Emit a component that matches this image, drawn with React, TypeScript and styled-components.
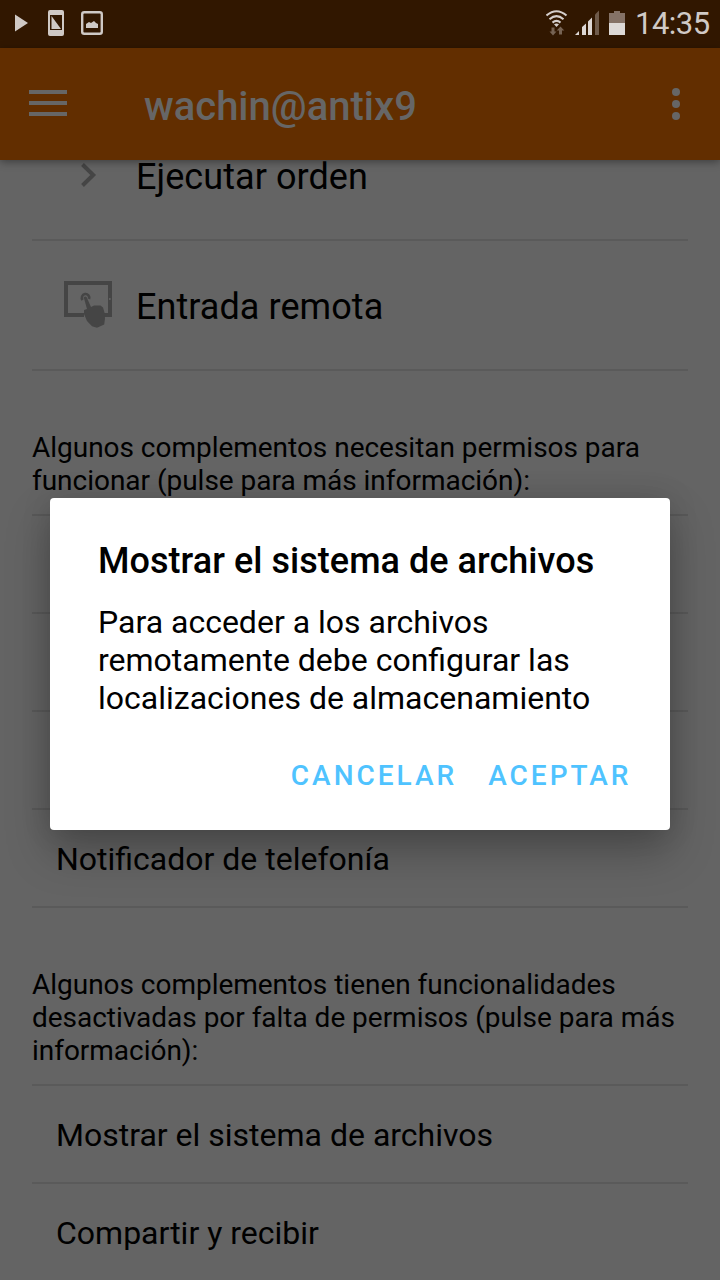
import React from 'react';
import styled, { createGlobalStyle } from 'styled-components';

const GlobalStyle = createGlobalStyle`
  * { box-sizing: border-box; }
  body { margin: 0; font-family: Roboto, sans-serif; background: #646464; color: #000; }
`;

const Screen = styled.div`
  position: relative;
  width: 720px;
  height: 1280px;
  overflow: hidden;
  display: flex;
  flex-direction: column;
  background: #646464;
`;

const StatusBar = styled.header`
  height: 48px;
  flex: none;
  display: flex;
  align-items: center;
  justify-content: space-between;
  background: #311700;
  svg { display: block; }
`;

const StatusGroup = styled.div`
  display: flex;
  align-items: center;
`;

const Clock = styled.span`
  width: 85px;
  font-size: 31px;
  line-height: 48px;
  letter-spacing: -0.5px;
  color: #d0cac6;
  white-space: nowrap;
`;

const AppBar = styled.div`
  position: relative;
  z-index: 1;
  height: 112px;
  flex: none;
  display: flex;
  align-items: center;
  padding: 0 40px 0 29px;
  background: #622e00;
  box-shadow: 0 2px 8px rgba(0, 0, 0, 0.38);
  svg { display: block; flex: none; }
`;

const AppTitle = styled.h1`
  margin: 6px 0 0 77px;
  flex: 1;
  font-size: 40px;
  line-height: 48px;
  font-weight: 500;
  color: #666;
`;

const Content = styled.main`
  flex: 1;
  min-height: 0;
  overflow: hidden;
  padding: 0 32px;
`;

const List = styled.div<{ $scrolled?: number }>`
  margin-top: ${(p) => -(p.$scrolled ?? 0)}px;
`;

const ActionRow = styled.div`
  height: 130px;
  display: flex;
  align-items: center;
  gap: 24px;
  padding-left: 32px;
  border-bottom: 2px solid #5a5a5a;
  font-size: 36px;
  letter-spacing: 0.06px;
  svg { display: block; flex: none; }
`;

const ActionLabel = styled.span`
  padding-top: 3px;
`;

const SectionText = styled.p`
  margin: 0;
  padding: 60px 0 17px;
  font-size: 28px;
  line-height: 33px;
  letter-spacing: -0.025px;
  border-bottom: 2px solid #5a5a5a;
`;

const PluginRow = styled.div`
  height: 98px;
  display: flex;
  align-items: center;
  padding-left: 24px;
  border-bottom: 2px solid #5a5a5a;
  font-size: 32px;
  padding-top: 2px;
`;

const Overlay = styled.div`
  position: absolute;
  inset: 48px 0 0;
  z-index: 2;
  display: flex;
  align-items: center;
  justify-content: center;
`;

const Dialog = styled.section`
  width: 620px;
  height: 332px;
  padding: 40px 24px 24px 48px;
  display: flex;
  flex-direction: column;
  background: #fff;
  border-radius: 4px;
  box-shadow: 0 22px 44px rgba(0, 0, 0, 0.26), 0 0 30px rgba(0, 0, 0, 0.12);
`;

const DialogTitle = styled.h2`
  margin: 0;
  font-size: 36px;
  line-height: 46px;
  font-weight: 500;
  letter-spacing: 0.04px;
`;

const DialogText = styled.p`
  margin: 19px 0 0;
  font-size: 32px;
  line-height: 38px;
`;

const Buttons = styled.div`
  display: flex;
  justify-content: flex-end;
  margin-top: 22px;
`;

const Button = styled.button`
  border: 0;
  background: none;
  height: 72px;
  padding: 0 14.5px 0 16.5px;
  font: 500 28px Roboto, sans-serif;
  letter-spacing: 3px;
  color: #4fc3ff;
`;

export default function App() {
  return (
    <>
      <GlobalStyle />
      <Screen>
        <StatusBar>
          <StatusGroup>
            <svg width="120" height="48" fill="#cfc9c5">
              <path d="M15 14.5v17L28 23z" />
              <path fillRule="evenodd" d="M50 10h12q2 0 2 2v22q0 2-2 2H50q-2 0-2-2V12q0-2 2-2zM50 15v15h12V15z" />
              <path d="M51.5 16v13H61z" />
              <rect x="82.2" y="12.2" width="19.6" height="21.6" rx="2" fill="none" stroke="#cfc9c5" strokeWidth="2.4" />
              <path d="M86 28v-4l3-2 2 1 3-2 2 2 2 1v4z" />
            </svg>
          </StatusGroup>
          <StatusGroup>
            <svg width="89" height="48" viewBox="546 0 89 48">
              <g fill="none" stroke="#d5cfcc" strokeWidth="2.1">
                <path d="M546.5 15.5q10-8.5 20 0" />
                <path d="M549.5 19.2q7-6 14 0" />
                <path d="M552.5 22.6q4-3.5 8 0" />
              </g>
              <path d="M554 24.3q2.5-1.8 5 0l-2.5 2.7z" fill="#d5cfcc" />
              <path d="M551.5 27.5h3v4h2l-3.5 4-3.5-4h2zM559 34.5v-4h-2.3l3.8-4 3.8 4H562v4z" fill="#766353" />
              <path d="M575 35l4-4v4zM582 35v-8l4-3.5V35zM588 35V21.5l4-4V35z" fill="#ddd7d4" />
              <path d="M595 35V14.5l4-4V35z" fill="#6f5b4b" />
              <path d="M609 13h5v-2h6v2h5v10h-16z" fill="#857266" />
              <path d="M609 23h16v12h-16z" fill="#ddd9d6" />
            </svg>
            <Clock>14:35</Clock>
          </StatusGroup>
        </StatusBar>

        <AppBar>
          <svg width="38" height="28" fill="#666">
            <path d="M0 0h38v4H0zM0 11h38v4H0zM0 22h38v4H0z" />
          </svg>
          <AppTitle>wachin@antix9</AppTitle>
          <svg width="8" height="32" fill="#666">
            <circle cx="4" cy="4" r="4" />
            <circle cx="4" cy="16" r="4" />
            <circle cx="4" cy="28" r="4" />
          </svg>
        </AppBar>

        <Content>
          <List $scrolled={49}>
            <ActionRow>
              <svg width="48" height="48" fill="none" stroke="#454545" strokeWidth="4">
                <path d="M18.5 13.5L29.2 24 18.5 34.5" />
              </svg>
              <ActionLabel>Ejecutar orden</ActionLabel>
            </ActionRow>
            <ActionRow>
              <svg width="48" height="48" fill="#454545">
                <path d="M0 0h48v36H40V32H44V4H4v28h16v4H0z" />
                <circle cx="45.8" cy="18" r="1" fill="#646464" />
                <path d="M18.6 19A3.7 3.7 0 1 1 25 18" fill="none" stroke="#454545" strokeWidth="2.6" />
                <path d="M19.8 16.5q1.5-1.8 3 0L27 26l3-1.5h6.5l2.5 2 1.5 5 .5 6-.8 6L33 46.8l-5-1.5-5-5.3-3-7v-4l3-1z" />
              </svg>
              <ActionLabel>Entrada remota</ActionLabel>
            </ActionRow>
          </List>
          <SectionText>
            Algunos complementos necesitan permisos para funcionar (pulse para más información):
          </SectionText>
          <PluginRow />
          <PluginRow />
          <PluginRow />
          <PluginRow>Notificador de telefonía</PluginRow>
          <SectionText>
            Algunos complementos tienen funcionalidades desactivadas por falta de permisos (pulse para más información):
          </SectionText>
          <PluginRow>Mostrar el sistema de archivos</PluginRow>
          <PluginRow>Compartir y recibir</PluginRow>
        </Content>

        <Overlay>
          <Dialog role="dialog">
            <DialogTitle>Mostrar el sistema de archivos</DialogTitle>
            <DialogText>
              Para acceder a los archivos remotamente debe configurar las localizaciones de almacenamiento
            </DialogText>
            <Buttons>
              <Button>CANCELAR</Button>
              <Button>ACEPTAR</Button>
            </Buttons>
          </Dialog>
        </Overlay>
      </Screen>
    </>
  );
}
